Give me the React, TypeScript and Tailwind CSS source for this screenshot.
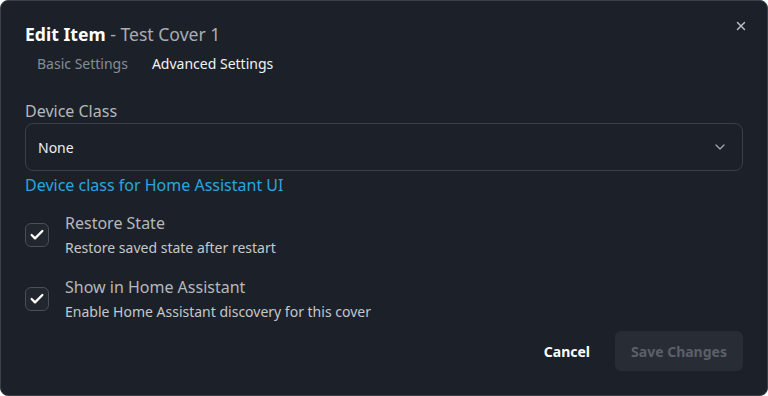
import { Check, ChevronDown, X } from 'lucide-react';

function CheckRow({ title, desc }: { title: string; desc: string }) {
  return (
    <div className="flex items-start gap-4">
      <div className="mt-[12px] flex h-6 w-6 items-center justify-center rounded-md border border-[#4a4f57] bg-[#22272f]">
        <Check className="h-4 w-4 text-white" strokeWidth={3.5} />
      </div>
      <div className="flex flex-col">
        <span className="text-[16px] leading-6 text-[#b4b8bd]">{title}</span>
        <span className="mt-[3px] text-[14px] leading-5 text-[#c4c7cb]">{desc}</span>
      </div>
    </div>
  );
}

export default function App() {
  return (
    <div
      className="relative h-[396px] w-[768px] overflow-hidden rounded-lg border border-[#3b4048] bg-[#1c2129]"
      style={{ fontFamily: '"Noto Sans", "Open Sans", sans-serif' }}
    >
      <button type="button" className="absolute right-[19px] top-[18px] text-[#b8bcc1]">
        <X className="h-[14px] w-[14px]" strokeWidth={2.5} />
      </button>

      <div className="px-6 pt-[21px]">
        <h2 className="text-[17.6px] leading-6 text-[#a9adb2]">
          <span className="font-bold text-white">Edit Item</span> - Test Cover 1
        </h2>
        <div className="mt-[8px] flex gap-6 pl-3 text-[14px] leading-5">
          <span className="text-[#878c93]">Basic Settings</span>
          <span className="text-[#f1f2f3]">Advanced Settings</span>
        </div>

        <div className="mt-[25px]">
          <label className="block text-[16px] leading-6 text-[#b4b8bd]">Device Class</label>
          <div className="flex h-[48px] items-center justify-between rounded-lg border border-[#3b4048] bg-[#1c2129] pl-3 pr-[14px]">
            <span className="text-[14px] text-[#eceef0]">None</span>
            <ChevronDown className="h-4 w-4 text-[#a0a4a9]" strokeWidth={2} />
          </div>
          <p className="mt-[2px] text-[16px] leading-6 text-[#2aa5df]">Device class for Home Assistant UI</p>
        </div>

        <div className="mt-[14px] flex flex-col gap-[17px]">
          <CheckRow title="Restore State" desc="Restore saved state after restart" />
          <CheckRow title="Show in Home Assistant" desc="Enable Home Assistant discovery for this cover" />
        </div>

        <div className="mt-[9px] flex items-center justify-end gap-[25px]">
          <button type="button" className="text-[14px] font-bold text-white">Cancel</button>
          <button
            type="button"
            disabled
            className="h-[40px] w-[128px] rounded-md bg-[#282d35] text-[14px] font-bold text-[#5b6068]"
          >
            Save Changes
          </button>
        </div>
      </div>
    </div>
  );
}
